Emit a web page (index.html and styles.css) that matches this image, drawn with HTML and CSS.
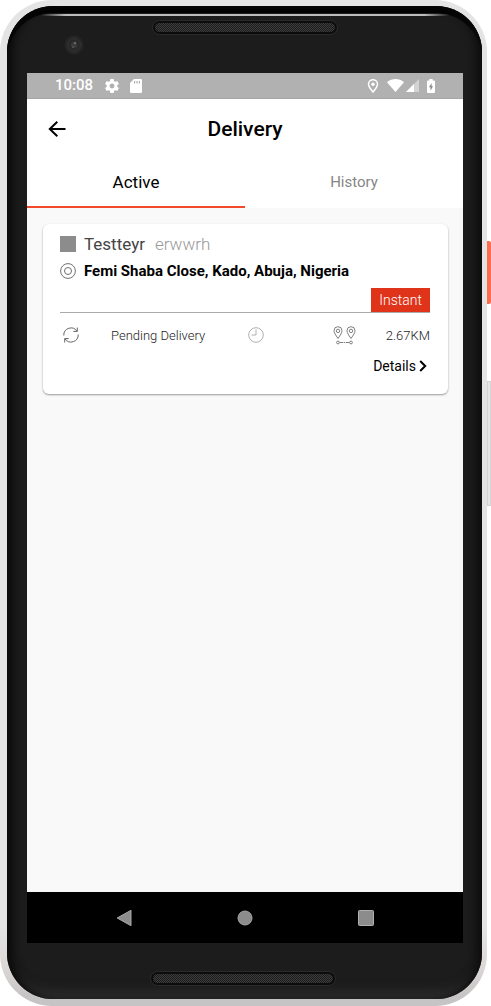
FILE: index.html
```html
<!DOCTYPE html>
<html lang="en">
<head>
<meta charset="utf-8">
<meta name="viewport" content="width=device-width, initial-scale=1">
<title>Delivery</title>
<link rel="stylesheet" href="styles.css">
</head>
<body>
<div class="phone">
  <span class="side-key side-key-power"></span>
  <span class="side-key side-key-volume"></span>
  <div class="bezel">
    <div class="forehead">
      <span class="shine"></span>
      <svg class="camera" viewBox="0 0 20 20" aria-hidden="true"><circle cx="10" cy="10" r="9.500" fill="#252525"/><circle cx="10" cy="10" r="6.500" fill="#292929" stroke="#333"/><circle cx="10" cy="10" r="3" fill="#3b3b3b"/><circle cx="11" cy="8" r="1.200" fill="#666"/><circle cx="9" cy="12" r="1" fill="#555"/></svg>
      <span class="speaker"></span>
    </div>
    <div class="screen">
      <div class="status">
        <span class="clock">10:08</span>
        <svg class="status-gear" viewBox="2 2 20 20" aria-hidden="true"><path fill="#fff" d="M19.430 12.980c.04-.32.07-.64.07-.98s-.03-.66-.07-.98l2.110-1.650c.19-.15.24-.42.12-.64l-2-3.460c-.12-.22-.39-.3-.61-.22l-2.490 1c-.52-.4-1.080-.73-1.690-.98l-.38-2.650C14.460 2.180 14.250 2 14 2h-4c-.25 0-.46.18-.49.42l-.38 2.650c-.61.25-1.170.59-1.690.98l-2.490-1c-.23-.09-.49 0-.61.22l-2 3.460c-.13.22-.07.49.12.64l2.110 1.650c-.04.32-.07.65-.07.98s.03.66.07.98l-2.110 1.650c-.19.15-.24.42-.12.64l2 3.460c.12.22.39.3.61.22l2.490-1c.52.4 1.080.73 1.690.98l.38 2.650c.03.24.24.42.49.42h4c.25 0 .46-.18.49-.42l.38-2.650c.61-.25 1.170-.59 1.690-.98l2.490 1c.23.09.49 0 .61-.22l2-3.460c.12-.22.07-.49-.12-.64zM12 15.500a3.500 3.500 0 1 1 0-7 3.500 3.500 0 0 1 0 7z"/></svg>
        <svg class="status-card" viewBox="0 0 12 14" aria-hidden="true"><path fill="#fff" d="M4 0h6.700Q12 0 12 1.300v11.400q0 1.300-1.300 1.300H1.300Q0 14 0 12.700V4z"/><path stroke="#b1b1b1" stroke-width="1.200" d="M4.600 2v2.400M7 2v2.400M9.400 2v2.400"/></svg>
        <span class="status-right">
          <svg class="status-pin" viewBox="0 0 12 14" aria-hidden="true"><path fill="none" stroke="#fff" stroke-width="1.500" d="M6 13C3 9.500 1.500 7.500 1.500 5.200a4.500 4.500 0 0 1 9 0C10.500 7.500 9 9.500 6 13z"/><circle cx="6" cy="5.200" r="1.700" fill="#fff"/></svg>
          <svg class="status-wifi" viewBox="0 0 17 13" aria-hidden="true"><path fill="#fff" d="M0 3.200C5-1 12-1 17 3.200L8.500 13z"/></svg>
          <svg class="status-signal" viewBox="0 0 13 13" aria-hidden="true"><path fill="#d3d3d3" d="M13 0v13H0z"/><path fill="#fff" d="M8 5v8H0z"/></svg>
          <svg class="status-battery" viewBox="0 0 8 14" aria-hidden="true"><path fill="#fff" d="M2.300 0h3.400v1.400H7q1 0 1 1V13q0 1-1 1H1q-1 0-1-1V2.400q0-1 1-1h1.300z"/><path fill="#888" d="M4.600 4 2 8.300h1.500v3.400L6 7.300H4.600z"/></svg>
        </span>
      </div>
      <header class="appbar">
        <button class="back" type="button" aria-label="Back"><svg viewBox="0 0 18 16" aria-hidden="true"><path fill="none" stroke="#000" stroke-width="2" d="M17.500 8H2M9.300.8 1.800 8l7.500 7.200"/></svg></button>
        <h1 class="title">Delivery</h1>
      </header>
      <nav class="tabs">
        <button class="tab tab-active" type="button">Active</button>
        <button class="tab" type="button">History</button>
      </nav>
      <main class="content">
        <article class="card">
          <div class="line">
            <span class="swatch"></span>
            <span class="item">Testteyr</span>
            <span class="note">erwwrh</span>
          </div>
          <div class="line">
            <svg class="target" viewBox="0 0 16 16" aria-hidden="true"><g fill="none" stroke="#707070"><circle cx="8" cy="8" r="7.400"/><circle cx="8" cy="8" r="3.500"/></g></svg>
            <span class="address">Femi Shaba Close, Kado, Abuja, Nigeria</span>
          </div>
          <div class="kind"><span class="badge">Instant</span></div>
          <div class="facts">
            <svg class="sync" viewBox="0 0 16 16" aria-hidden="true"><g fill="none" stroke="#666"><path d="M.8 8.500A7.200 7.200 0 0 1 14 4.200M15.200 7.500A7.200 7.200 0 0 1 2 11.800"/><path d="M14.300.500v3.900h-4M1.700 15.500v-3.900h4"/></g></svg>
            <span class="state">Pending Delivery</span>
            <svg class="timer" viewBox="0 0 16 16" aria-hidden="true"><g fill="none" stroke="#b0b0b0"><circle cx="8" cy="8" r="7.300"/><path d="M8 2.500V8H3.500"/></g></svg>
            <svg class="route" viewBox="0 0 24 19" aria-hidden="true"><g fill="none" stroke="#808080"><path d="M5 12.500C2.500 8.800 1 6.800 1 4.700a4 4 0 0 1 8 0c0 2.100-1.500 4.100-4 7.800zM18 12.500c-2.500-3.700-4-5.700-4-7.800a4 4 0 0 1 8 0c0 2.100-1.500 4.100-4 7.800z"/><circle cx="5" cy="4.900" r="1.700"/><circle cx="18" cy="4.900" r="1.700"/><circle cx="5" cy="16.500" r="1.400"/><circle cx="18" cy="16.500" r="1.400"/><path d="M6.500 16.500h3.500M13 16.500h3.500M10.700 16.500h1.600"/></g></svg>
            <span class="distance">2.67KM</span>
          </div>
          <a class="details" href="#">Details<svg viewBox="0 0 8 12" aria-hidden="true"><path fill="none" stroke="#000" stroke-width="2" d="m1.200 1 5 5-5 5"/></svg></a>
        </article>
      </main>
      <div class="softkeys">
        <button class="softkey" type="button" aria-label="Back"><svg viewBox="0 0 16 18" aria-hidden="true"><path fill="#8c8c8c" stroke="#aaa" d="M15 1.300v15.400L1.200 9z"/></svg></button>
        <button class="softkey" type="button" aria-label="Home"><svg viewBox="0 0 16 18" aria-hidden="true"><circle cx="8" cy="9" r="7" fill="#8c8c8c" stroke="#a5a5a5"/></svg></button>
        <button class="softkey" type="button" aria-label="Recent apps"><svg viewBox="0 0 16 18" aria-hidden="true"><rect x=".5" y="1.500" width="15" height="15" rx="1" fill="#8c8c8c" stroke="#b0b0b0"/></svg></button>
      </div>
    </div>
    <div class="chin"><span class="speaker"></span></div>
  </div>
</div>
</body>
</html>
```
FILE: styles.css
```css
* { box-sizing: border-box; }
body {
  margin: 0;
  padding-right: 4px;
  background: #fff;
  color: #000;
  font-family: Roboto, "Liberation Sans", sans-serif;
}
button {
  margin: 0;
  padding: 0;
  border: 0;
  background: none;
  color: inherit;
  font: inherit;
  cursor: pointer;
}
svg { display: block; flex: none; }

.phone {
  position: relative;
  display: flex;
  min-height: 100vh;
  padding: 6px 5px 7px 7px;
  border-radius: 52px;
  background: linear-gradient(#e4e4e4 0 92%, #dcd8d7 96%, #c6c4c4 99%);
}
.side-key { position: absolute; left: 100%; width: 4px; }
.side-key-power { top: 241px; height: 63px; background: #fb6c50; border-radius: 0 2px 2px 0; }
.side-key-volume { top: 381px; height: 125px; background: #e6e6e6; border: 1px solid #d4d4d4; }
.bezel {
  flex: 1;
  display: flex;
  flex-direction: column;
  padding: 0 19px 0 20px;
  border-radius: 46px;
  overflow: hidden;
  background: #1c1c1c;
  box-shadow: inset 9px 0 10px -4px #080808, inset -9px 0 10px -4px #0c0c0c, inset 0 7px 0 #040404, inset 0 -14px 12px -8px #333;
}
.forehead {
  position: relative;
  display: flex;
  justify-content: center;
  height: 67px;
  padding-top: 15px;
}
.shine {
  position: absolute;
  top: 8px;
  left: 14px;
  right: 14px;
  height: 2px;
  background: linear-gradient(90deg, transparent, #bbb 6%, #bbb 94%, transparent);
}
.camera { position: absolute; left: 37px; top: 29px; width: 20px; height: 20px; }
.speaker {
  width: 184px;
  height: 13px;
  border: 2px solid #0c0c0c;
  border-radius: 7px;
  outline: 1px solid #2a2a2a;
  background: repeating-conic-gradient(#1c1c1c 0 25%, #3c3c3c 0 50%) 0 0 / 2px 2px;
}
.chin {
  display: flex;
  justify-content: center;
  align-items: flex-start;
  height: 56px;
  padding: 29px 4px 0 0;
}
.screen { flex: 1; display: flex; flex-direction: column; background: #f9f9f9; }

.status {
  display: flex;
  align-items: center;
  height: 26px;
  padding: 0 28px;
  background: #b1b1b1;
  border-bottom: 1px solid #a4a4a4;
  color: #fff;
}
.clock { font-size: 15px; font-weight: 500; line-height: 25px; }
.status-gear { width: 14px; height: 14px; margin-left: 12px; }
.status-card { width: 12px; height: 14px; margin-left: 11px; }
.status-right { display: flex; align-items: center; margin-left: auto; }
.status-pin { width: 12px; height: 14px; }
.status-wifi { width: 17px; height: 13px; margin-left: 8px; }
.status-signal { width: 13px; height: 13px; margin-left: 2px; }
.status-battery { width: 8px; height: 14px; margin-left: 8px; }

.appbar {
  display: grid;
  grid-template-columns: 60px 1fr 60px;
  align-items: center;
  height: 59px;
  background: #fff;
}
.back { display: flex; align-items: center; height: 59px; padding-left: 21px; }
.back svg { width: 18px; height: 16px; }
.title { margin: 0; text-align: center; font-size: 21px; font-weight: 500; line-height: 24px; }

.tabs { display: flex; height: 50px; background: #fff; }
.tab {
  flex: 1;
  border-bottom: 2px solid transparent;
  color: #868686;
  font-size: 15px;
  line-height: 48px;
}
.tab-active { border-color: #f04a2a; color: #000; font-size: 17px; }

.content { flex: 1; padding: 16px 15px 16px 16px; }
.card {
  padding: 8px 18px 19px 17px;
  border-radius: 6px;
  background: #fff;
  box-shadow: 0 1px 2px #999;
}
.line { display: flex; align-items: center; height: 24px; margin-bottom: 3px; }
.swatch { width: 16px; height: 16px; margin-right: 8px; background: #8c8c8c; }
.item { color: #444; font-size: 17px; }
.note { margin-left: 10px; color: #999; font-size: 17px; font-weight: 300; }
.target { width: 16px; height: 16px; margin-right: 8px; }
.address { font-size: 15px; font-weight: 700; }
.kind {
  display: flex;
  justify-content: flex-end;
  margin-top: 5px;
  border-bottom: 1px solid #aaa;
}
.badge {
  padding: 0 8px;
  background: #e0341a;
  color: #fff;
  font-size: 14px;
  font-weight: 300;
  line-height: 24px;
}
.facts {
  display: flex;
  align-items: center;
  height: 44px;
  padding-left: 3px;
  color: #222;
  font-size: 13px;
  font-weight: 300;
}
.sync { width: 16px; height: 16px; }
.state { margin-left: 32px; }
.timer { width: 16px; height: 16px; margin: 0 auto 0 43px; }
.route { width: 24px; height: 19px; }
.distance { margin-left: 29px; }
.details {
  display: flex;
  align-items: center;
  justify-content: flex-end;
  gap: 3px;
  padding-right: 3px;
  color: #000;
  font-size: 14px;
  line-height: 18px;
  text-decoration: none;
}
.details svg { width: 8px; height: 12px; }

.softkeys {
  display: flex;
  justify-content: center;
  height: 51px;
  background: #000;
}
.softkey { display: flex; align-items: center; justify-content: center; width: 121px; }
.softkey svg { width: 16px; height: 18px; }
```
